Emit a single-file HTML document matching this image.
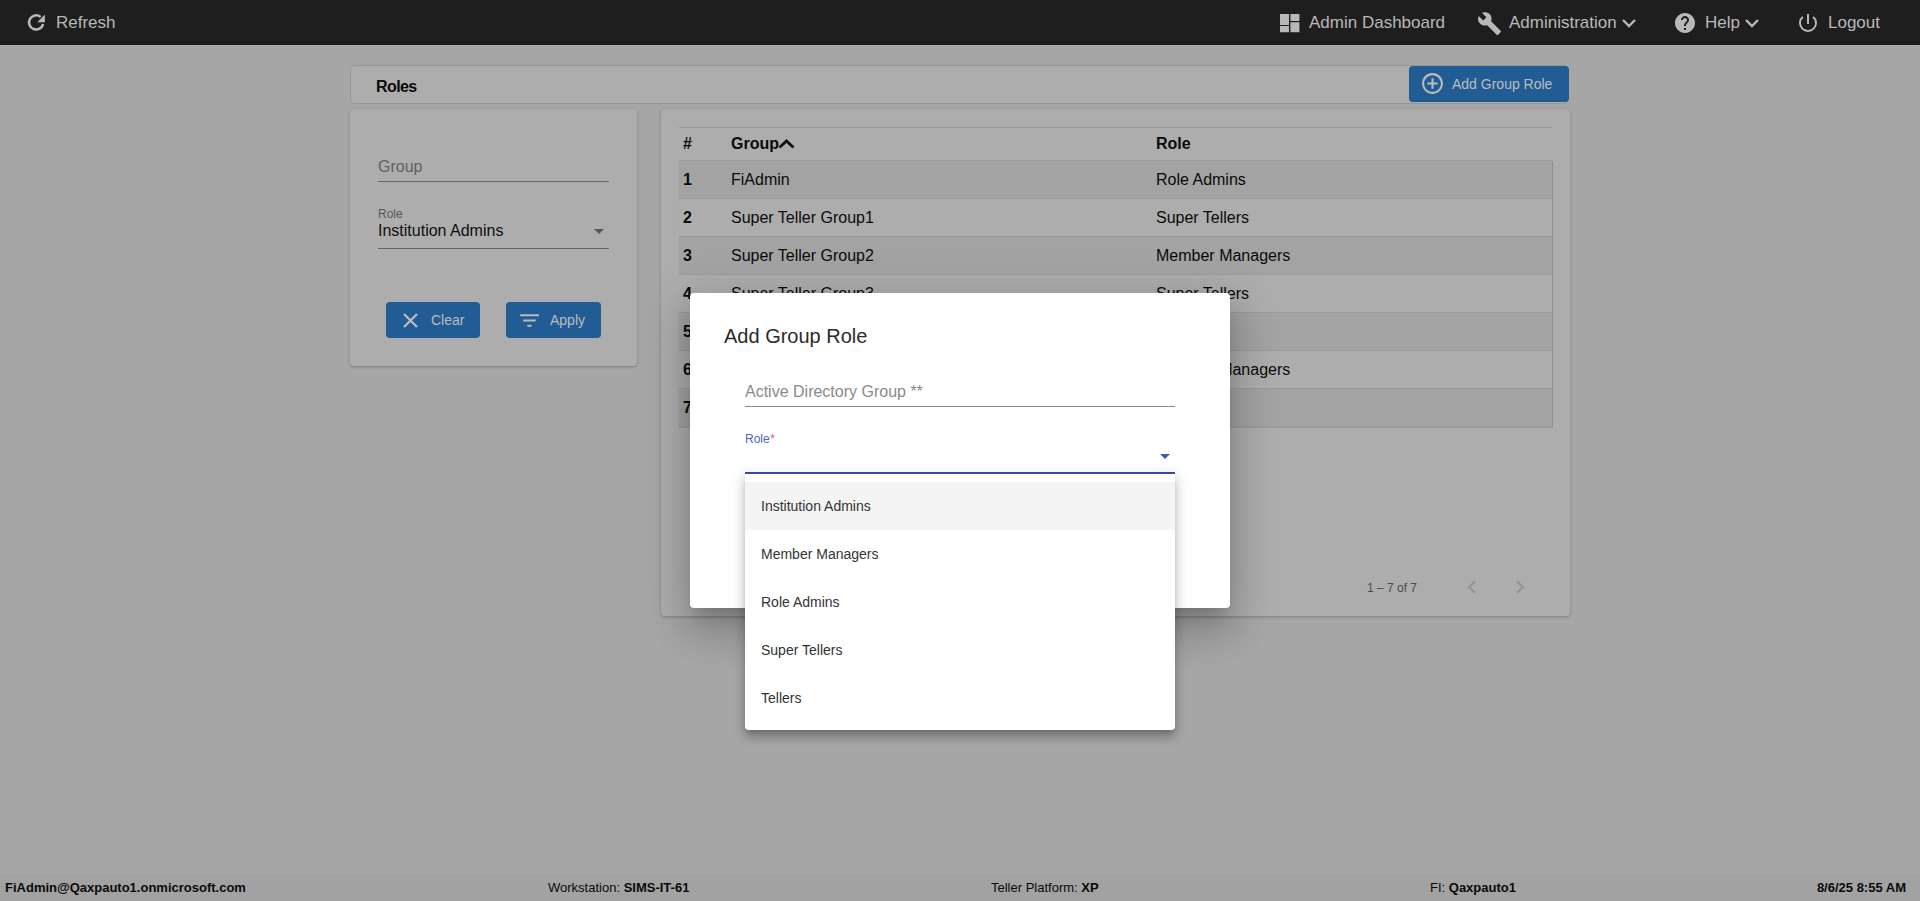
<!DOCTYPE html>
<html><head><meta charset="utf-8">
<style>
*{box-sizing:border-box;margin:0;padding:0}
html,body{width:1920px;height:901px;overflow:hidden}
body{font-family:"Liberation Sans",sans-serif;background:#a6a6a6;position:relative;color:#0a0a0a}
.abs{position:absolute}
#hdr{left:0;top:0;width:1920px;height:45px;background:#1e1e1e;color:#b8b8b8;font-size:17px}
#hdr .t{position:absolute;top:13px;line-height:19px;white-space:nowrap}
#hdr svg{position:absolute}
#titlebar{left:350px;top:65px;width:1219px;height:39px;background:#adadad;border:1px solid #969696;border-radius:5px}
#titlebar .t{position:absolute;left:25px;top:11.5px;font-weight:bold;font-size:16px;letter-spacing:-0.6px;line-height:18px;color:#0a0a0a}
#addbtn{left:1409px;top:66px;width:160px;height:36px;background:#215c94;border-radius:4px;color:#bcbcbc;font-size:14px}
.card{background:#adadad;border-radius:4px;box-shadow:0 1px 3px rgba(0,0,0,.25)}
#filter{left:350px;top:109px;width:287px;height:257px}
#tablecard{left:661px;top:109px;width:909px;height:507px}
.fld{position:absolute;left:28px;width:231px;border-bottom:1px solid #676767}
.btn{position:absolute;background:#215c94;border-radius:4px;color:#bcbcbc;font-size:14px}
.btn .t{position:absolute;top:10px;line-height:16px}
table{border-collapse:collapse}
#tbl{position:absolute;left:18px;top:18px;width:873px}
.row{position:absolute;left:18px;width:873px;height:38px;border-bottom:1px solid #989a9c;font-size:16px}
.row .c{position:absolute;top:10px;line-height:18px;white-space:nowrap}
.odd{background:#a3a3a3}
#footer{left:0;top:874px;width:1920px;height:27px;background:#a2a2a2;font-size:13px;color:#0a0a0a}
#footer .t{position:absolute;top:6px;line-height:15px;white-space:nowrap}
b{font-weight:bold}
#modal{left:690px;top:293px;width:540px;height:315px;background:#fff;border-radius:4px;
 box-shadow:0 11px 15px -7px rgba(0,0,0,.2),0 24px 38px 3px rgba(0,0,0,.14),0 9px 46px 8px rgba(0,0,0,.12)}
#panel{left:745px;top:474px;width:430px;height:256px;background:#fff;border-radius:0 0 4px 4px;
 box-shadow:0 5px 5px -3px rgba(0,0,0,.2),0 8px 10px 1px rgba(0,0,0,.14),0 3px 14px 2px rgba(0,0,0,.12)}
.opt{position:absolute;left:0;width:430px;height:48px;font-size:14px;color:#333}
.opt .t{position:absolute;left:16px;top:16px;line-height:16px}
</style></head>
<body>
<div id="hdr" class="abs">
  <svg style="left:0;top:0" width="60" height="45" viewBox="0 0 60 45"><path fill="none" stroke="#b8b8b8" stroke-width="2.6" d="M43.1 23.9A7.1 7.1 0 1 1 40.6 16.9"/><path fill="#b8b8b8" d="M44.9 14.6L44.9 22.2L37.3 22.2Z"/></svg>
  <div class="t" style="left:56px">Refresh</div>
  <svg style="left:1280px;top:14px" width="20" height="19" viewBox="0 0 20 19"><path fill="#b8b8b8" d="M0 0h9v11H0zM0 12h9v6.2H0zM10.4 0h9v7H10.4zM10.4 8.2h9v10H10.4z"/></svg>
  <div class="t" style="left:1309px">Admin Dashboard</div>
  <svg style="left:1476.5px;top:10.5px" width="25" height="25" viewBox="0 0 24 24"><path fill="#b8b8b8" d="M22.7 19l-9.1-9.1c.9-2.3.4-5-1.5-6.9-2-2-5-2.4-7.4-1.3L9 6 6 9 1.6 4.7C.4 7.1.9 10.1 2.9 12.1c1.9 1.9 4.6 2.4 6.9 1.5l9.1 9.1c.4.4 1 .4 1.4 0l2.3-2.3c.5-.4.5-1.1.1-1.4z"/></svg>
  <div class="t" style="left:1509px">Administration</div>
  <svg style="left:1620px;top:16px" width="18" height="14" viewBox="0 0 18 14"><path fill="none" stroke="#b8b8b8" stroke-width="2.4" d="M3 4l6 6 6-6"/></svg>
  <svg style="left:1673px;top:11px" width="24" height="24" viewBox="0 0 24 24"><path fill="#b8b8b8" d="M12 2C6.48 2 2 6.48 2 12s4.48 10 10 10 10-4.48 10-10S17.52 2 12 2zm1 17h-2v-2h2v2zm2.07-7.75l-.9.92C13.45 12.9 13 13.5 13 15h-2v-.5c0-1.1.45-2.1 1.17-2.83l1.24-1.26c.37-.36.59-.86.59-1.41 0-1.1-.9-2-2-2s-2 .9-2 2H8c0-2.21 1.79-4 4-4s4 1.79 4 4c0 .88-.36 1.68-.93 2.25z"/></svg>
  <div class="t" style="left:1705px">Help</div>
  <svg style="left:1743px;top:16px" width="18" height="14" viewBox="0 0 18 14"><path fill="none" stroke="#b8b8b8" stroke-width="2.4" d="M3 4l6 6 6-6"/></svg>
  <svg style="left:1796px;top:11px" width="24" height="24" viewBox="0 0 24 24"><path fill="#b8b8b8" d="M13 3h-2v10h2V3zm4.83 2.17l-1.42 1.42A6.92 6.92 0 0 1 19 12c0 3.87-3.13 7-7 7A6.995 6.995 0 0 1 7.58 6.58L6.17 5.17A8.932 8.932 0 0 0 3 12a9 9 0 0 0 18 0c0-2.74-1.23-5.18-3.17-6.83z"/></svg>
  <div class="t" style="left:1828px">Logout</div>
</div>

<div id="titlebar" class="abs"><div class="t">Roles</div></div>
<div id="addbtn" class="abs">
  <svg style="position:absolute;left:11px;top:5px" width="25" height="25" viewBox="0 0 24 24"><path fill="#bcbcbc" d="M13 7h-2v4H7v2h4v4h2v-4h4v-2h-4V7zm-1-5C6.49 2 2 6.49 2 12s4.49 10 10 10 10-4.49 10-10S17.51 2 12 2zm0 18c-4.41 0-8-3.59-8-8s3.59-8 8-8 8 3.59 8 8-3.59 8-8 8z"/></svg>
  <div style="position:absolute;left:43px;top:10px;line-height:16px">Add Group Role</div>
</div>

<div id="filter" class="abs card">
  <div class="fld" style="top:48px;height:25px;color:#5f5f5f;font-size:16px"><div style="position:absolute;top:1px;line-height:18px">Group</div></div>
  <div style="position:absolute;left:28px;top:98px;font-size:12px;color:#575757;line-height:14px">Role</div>
  <div class="fld" style="top:112px;height:28px;font-size:16px;color:#0f0f0f"><div style="position:absolute;top:1px;line-height:18px">Institution Admins</div>
    <div style="position:absolute;left:216px;top:8px;width:0;height:0;border-left:5px solid transparent;border-right:5px solid transparent;border-top:5px solid #575757"></div>
  </div>
  <div class="btn" style="left:36px;top:193px;width:94px;height:36px">
    <svg style="position:absolute;left:0;top:0" width="94" height="36" viewBox="0 0 94 36"><path fill="none" stroke="#bcbcbc" stroke-width="2.3" d="M18 12L31 25M31 12L18 25"/></svg>
    <div class="t" style="left:45px">Clear</div>
  </div>
  <div class="btn" style="left:156px;top:193px;width:95px;height:36px">
    <svg style="position:absolute;left:11px;top:6px" width="25" height="25" viewBox="0 0 24 24"><path fill="#bcbcbc" d="M10 18h4v-2h-4v2zM3 6v2h18V6H3zm3 7h12v-2H6v2z"/></svg>
    <div class="t" style="left:44px">Apply</div>
  </div>
</div>

<div id="tablecard" class="abs card">
  <div style="position:absolute;left:18px;top:18px;width:873px;height:1px;background:#979797"></div>
  <div class="row" style="top:19px;height:33px;font-weight:bold">
    <div class="c" style="left:4px;top:7px">#</div>
    <div class="c" style="left:52px;top:7px">Group<svg style="vertical-align:-1px;margin-left:-1px" width="17" height="12" viewBox="0 0 17 12"><path fill="none" stroke="#111" stroke-width="2.8" d="M1.5 9.6l7-6.6 7 6.6"/></svg></div>
    <div class="c" style="left:477px;top:7px">Role</div>
  </div>
  <div style="position:absolute;left:18px;top:52px;width:874px;height:266px;border-right:1px solid #8e8e8e;border-bottom:1px solid #8e8e8e;box-shadow:0 1px 1px rgba(0,0,0,.08)"></div>
  <div class="row odd" style="top:52px"><div class="c" style="left:4px;font-weight:bold">1</div><div class="c" style="left:52px">FiAdmin</div><div class="c" style="left:477px">Role Admins</div></div>
  <div class="row" style="top:90px"><div class="c" style="left:4px;font-weight:bold">2</div><div class="c" style="left:52px">Super Teller Group1</div><div class="c" style="left:477px">Super Tellers</div></div>
  <div class="row odd" style="top:128px"><div class="c" style="left:4px;font-weight:bold">3</div><div class="c" style="left:52px">Super Teller Group2</div><div class="c" style="left:477px">Member Managers</div></div>
  <div class="row" style="top:166px"><div class="c" style="left:4px;font-weight:bold">4</div><div class="c" style="left:52px">Super Teller Group3</div><div class="c" style="left:477px">Super Tellers</div></div>
  <div class="row odd" style="top:204px"><div class="c" style="left:4px;font-weight:bold">5</div><div class="c" style="left:52px">Group5</div><div class="c" style="left:477px">Tellers</div></div>
  <div class="row" style="top:242px"><div class="c" style="left:4px;font-weight:bold">6</div><div class="c" style="left:52px">Group6</div><div class="c" style="left:477px">Member Managers</div></div>
  <div class="row odd" style="top:280px"><div class="c" style="left:4px;font-weight:bold">7</div><div class="c" style="left:52px">Group7</div><div class="c" style="left:477px">Tellers</div></div>
  <div style="position:absolute;left:706px;top:472px;font-size:12px;color:#4a4a4a;line-height:14px">1 – 7 of 7</div>
  <svg style="position:absolute;left:798px;top:465px" width="26" height="26" viewBox="0 0 24 24"><path fill="#939393" d="M15.41 7.41L14 6l-6 6 6 6 1.41-1.41L10.83 12z"/></svg>
  <svg style="position:absolute;left:845.5px;top:465px" width="26" height="26" viewBox="0 0 24 24"><path fill="#939393" d="M10 6L8.59 7.41 13.17 12l-4.58 4.59L10 18l6-6z"/></svg>
</div>

<div id="footer" class="abs">
  <div class="t" style="left:5px"><b>FiAdmin@Qaxpauto1.onmicrosoft.com</b></div>
  <div class="t" style="left:548px">Workstation:&nbsp;<b>SIMS-IT-61</b></div>
  <div class="t" style="left:991px">Teller Platform: <b>XP</b></div>
  <div class="t" style="left:1430px">FI: <b>Qaxpauto1</b></div>
  <div class="t" style="right:14px"><b>8/6/25 8:55 AM</b></div>
</div>

<div id="modal" class="abs">
  <div style="position:absolute;left:34px;top:31px;font-size:20px;line-height:24px;color:#2b2b2b">Add Group Role</div>
  <div style="position:absolute;left:55px;top:88px;width:430px;height:26px;border-bottom:1px solid #8c8c8c">
    <div style="position:absolute;top:2px;font-size:16px;line-height:18px;color:#8a8a8a">Active Directory Group **</div>
  </div>
  <div style="position:absolute;left:55px;top:139px;font-size:12px;line-height:14px;color:#5262c2">Role<span style="color:#ff4081;margin-left:0.5px">*</span></div>
  <div style="position:absolute;left:55px;top:155px;width:430px;height:26px;border-bottom:2px solid #3a4bb3">
    <div style="position:absolute;left:415px;top:6px;width:0;height:0;border-left:5px solid transparent;border-right:5px solid transparent;border-top:5px solid #4556b8"></div>
  </div>
</div>

<div id="panel" class="abs">
  <div class="opt" style="top:8px;background:#f4f4f4"><div class="t">Institution Admins</div></div>
  <div class="opt" style="top:56px"><div class="t">Member Managers</div></div>
  <div class="opt" style="top:104px"><div class="t">Role Admins</div></div>
  <div class="opt" style="top:152px"><div class="t">Super Tellers</div></div>
  <div class="opt" style="top:200px"><div class="t">Tellers</div></div>
</div>
</body></html>
